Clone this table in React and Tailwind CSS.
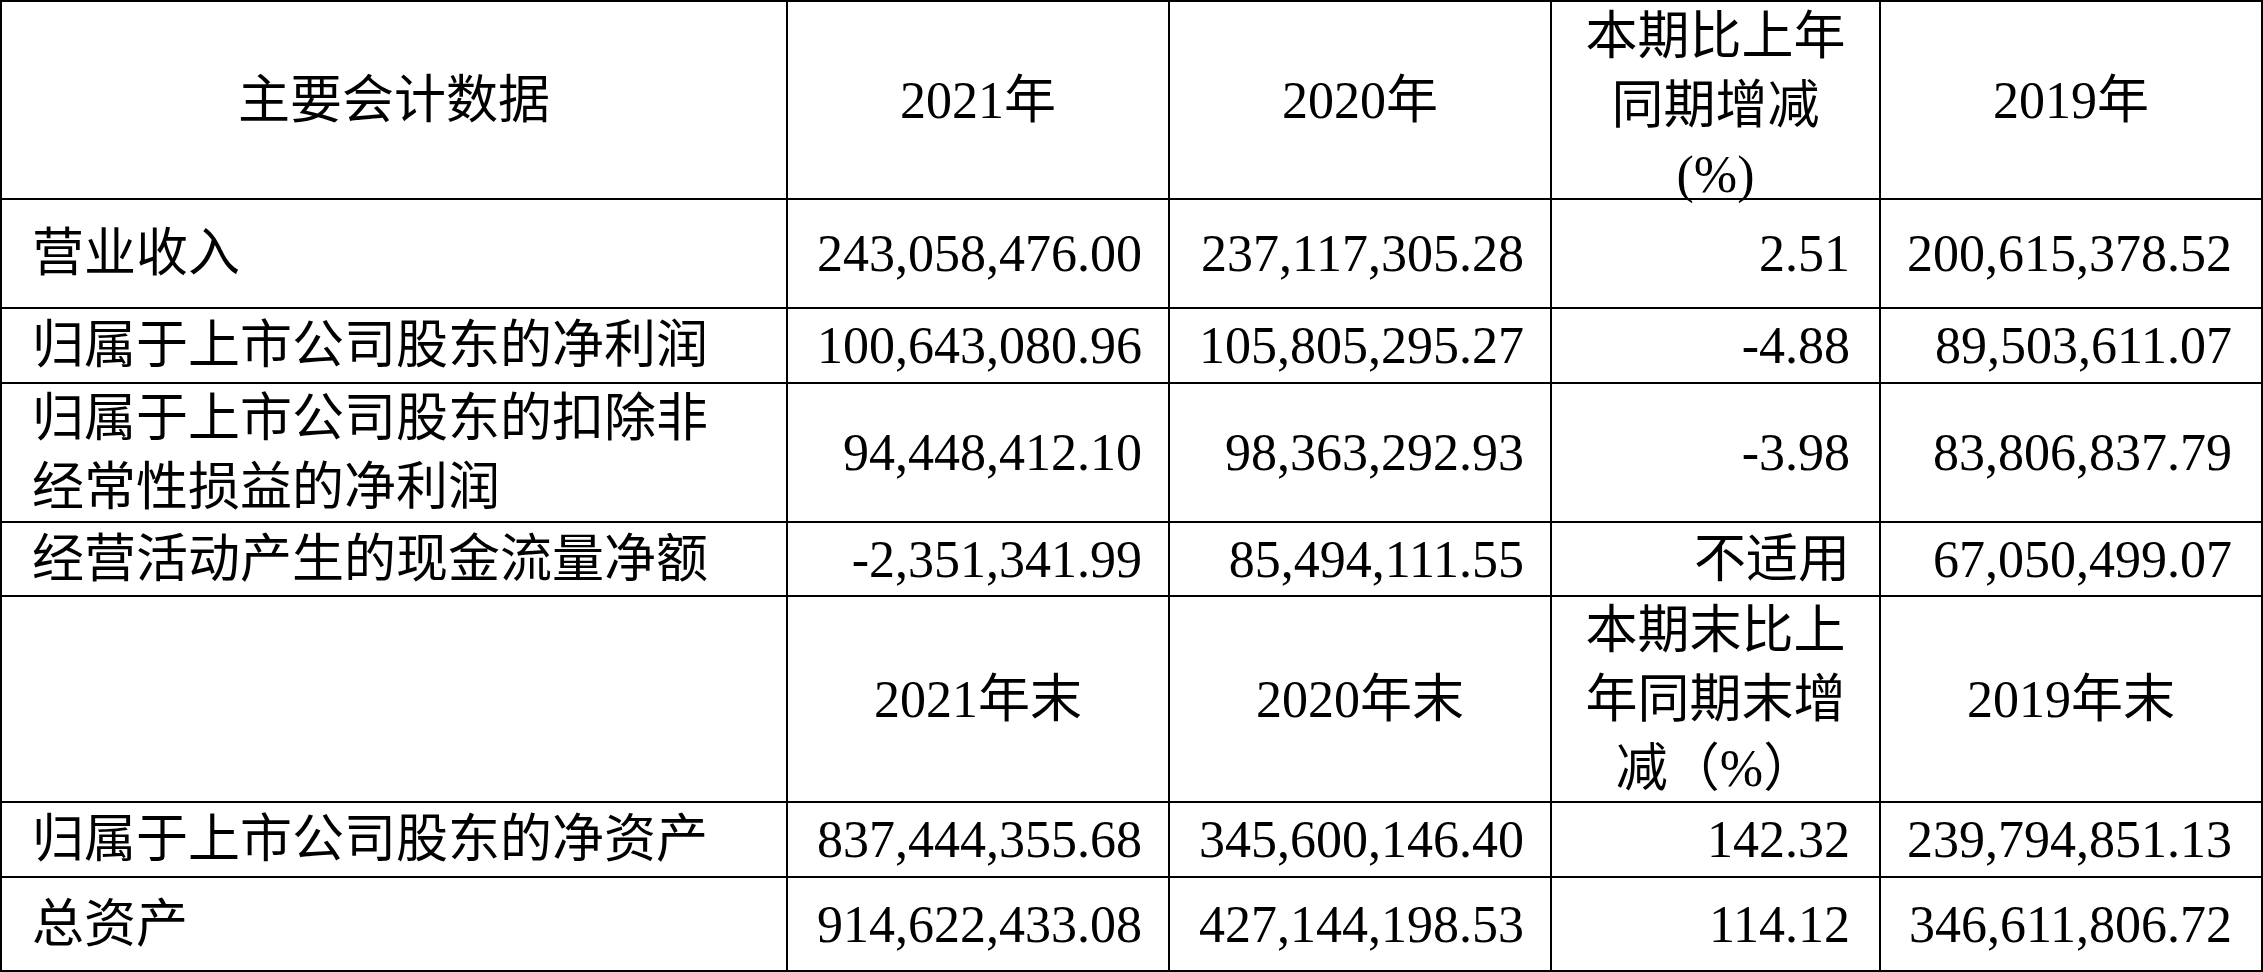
const font = { fontFamily: '"Liberation Serif", "Noto Sans CJK SC", serif' };

const rows = [
  { label: "营业收入", values: ["243,058,476.00", "237,117,305.28", "2.51", "200,615,378.52"] },
  { label: "归属于上市公司股东的净利润", values: ["100,643,080.96", "105,805,295.27", "-4.88", "89,503,611.07"] },
  {
    label: (
      <>
        归属于上市公司股东的扣除非
        <br />
        经常性损益的净利润
      </>
    ),
    values: ["94,448,412.10", "98,363,292.93", "-3.98", "83,806,837.79"],
  },
  { label: "经营活动产生的现金流量净额", values: ["-2,351,341.99", "85,494,111.55", "不适用", "67,050,499.07"] },
];

const balance = [
  { label: "归属于上市公司股东的净资产", values: ["837,444,355.68", "345,600,146.40", "142.32", "239,794,851.13"] },
  { label: "总资产", values: ["914,622,433.08", "427,144,198.53", "114.12", "346,611,806.72"] },
];

function Head({ children, top }) {
  return (
    <div
      className={
        "flex justify-center border-r-2 border-b-2 border-black text-center leading-[69px] " +
        (top ? "items-start" : "items-center")
      }
    >
      <div>{children}</div>
    </div>
  );
}

function Label({ children }) {
  return (
    <div className="flex items-center border-r-2 border-b-2 border-black pl-[30px] leading-[69px]">
      <div>{children}</div>
    </div>
  );
}

function Num({ children, wide }) {
  return (
    <div
      className={
        "flex items-center justify-end border-r-2 border-b-2 border-black leading-[69px] " +
        (wide ? "pr-[29px]" : "pr-[26px]")
      }
    >
      {children}
    </div>
  );
}

function DataRow({ row }) {
  return (
    <>
      <Label>{row.label}</Label>
      <Num>{row.values[0]}</Num>
      <Num>{row.values[1]}</Num>
      <Num wide>{row.values[2]}</Num>
      <Num wide>{row.values[3]}</Num>
    </>
  );
}

export default function App() {
  return (
    <div className="min-h-screen w-[2263px] bg-white text-black" style={font}>
      <div className="grid w-[2263px] grid-cols-[786px_382px_382px_329px_382px] grid-rows-[198px_109px_75px_139px_74px_206px_75px_94px] border-t-2 border-l-2 border-black text-[52px]">
        <Head>主要会计数据</Head>
        <Head>2021年</Head>
        <Head>2020年</Head>
        <Head top>
          本期比上年
          <br />
          同期增减
          <br />
          (%)
        </Head>
        <Head>2019年</Head>

        {rows.map((r, i) => (
          <DataRow key={i} row={r} />
        ))}

        <Head></Head>
        <Head>2021年末</Head>
        <Head>2020年末</Head>
        <Head>
          本期末比上
          <br />
          年同期末增
          <br />
          减（%）
        </Head>
        <Head>2019年末</Head>

        {balance.map((r, i) => (
          <DataRow key={i} row={r} />
        ))}
      </div>
    </div>
  );
}
